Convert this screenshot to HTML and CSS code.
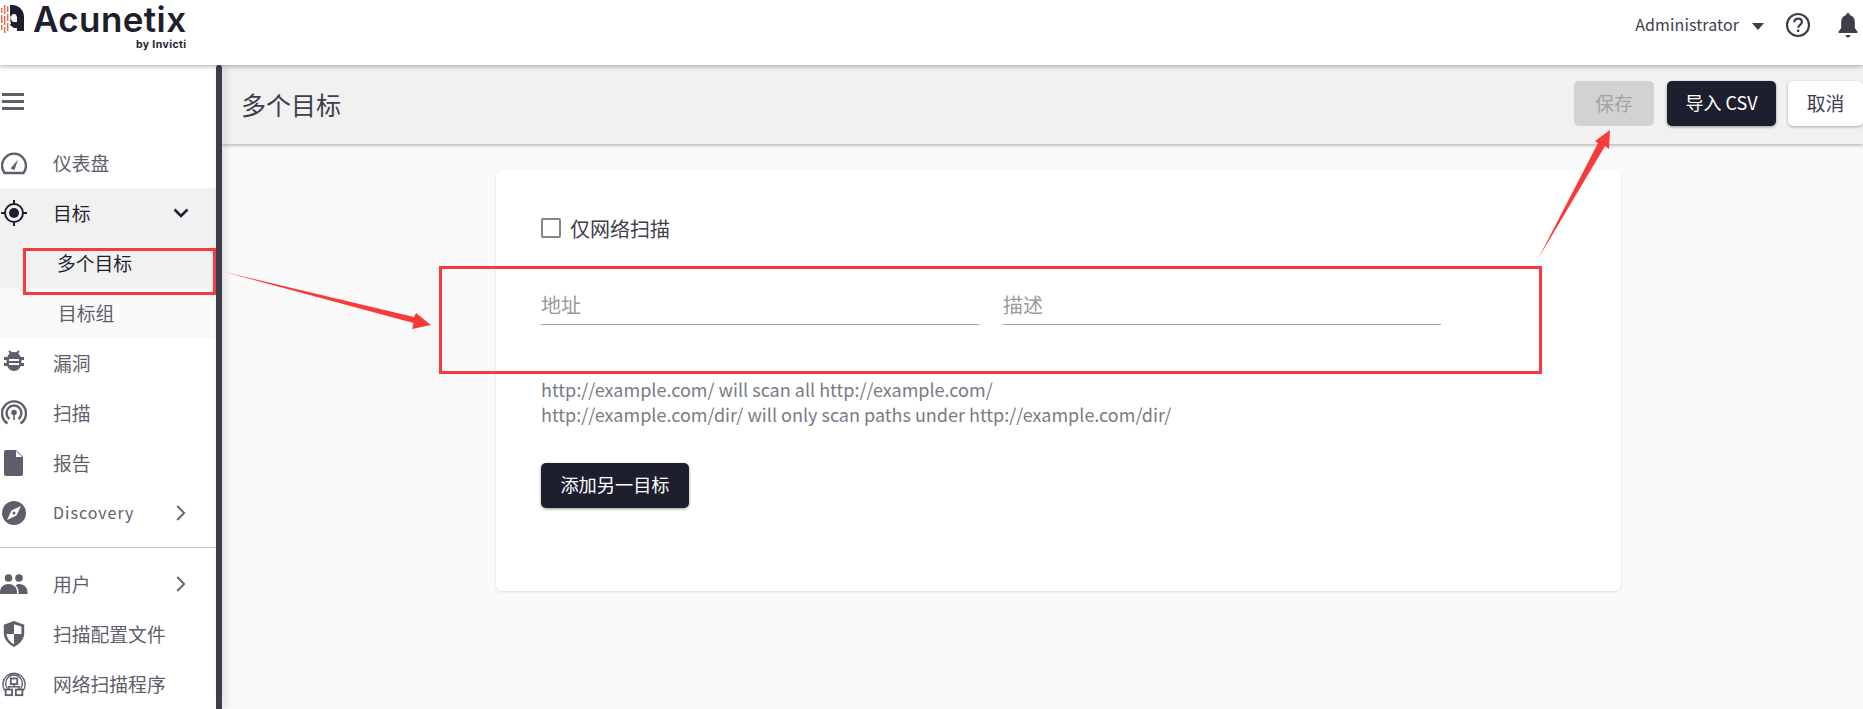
FILE: index.html
```html
<!DOCTYPE html>
<html lang="zh">
<head>
<meta charset="utf-8">
<title>Acunetix</title>
<link rel="stylesheet" href="styles.css">
</head>
<body>
<header class="topbar">
  <div class="logo">
    <svg class="logo-mark" viewBox="0 0 24 28" width="24" height="28">
      <g fill="#f0654a"><rect x="1" y="3" width="1.400" height="5"/><rect x="1" y="10" width="1.400" height="8"/><rect x="1" y="20" width="1.400" height="5"/><rect x="4" y="0" width="1.400" height="9"/><rect x="4" y="11" width="1.400" height="9"/><rect x="4" y="22" width="1.400" height="6"/><rect x="7" y="1" width="1.400" height="6"/><rect x="7" y="9" width="1.400" height="7"/><rect x="7" y="18" width="1.400" height="8"/></g>
      <path fill-rule="evenodd" d="M10 0h2c7 0 12 5 12 12v14h-7v-3h-3l-4-3 1-2c-1-1-1-4 0-5l-1-3V0zm4 9c-2 0-3 2-3 4s1 4 3 4h3v-4c0-2-1-4-3-4z" fill="#1e1f2e"/>
    </svg>
    <div class="logo-text">
      <span class="logo-name">Acunetix</span>
      <span class="logo-sub">by Invicti</span>
    </div>
  </div>
  <div class="top-actions">
    <span class="user">Administrator</span>
    <svg class="caret" viewBox="0 0 12 7" width="12" height="7"><path d="M0 0h12L6 7z"/></svg>
    <svg class="help" viewBox="0 0 26 26" width="26" height="26"><circle cx="13" cy="13" r="11" fill="none" stroke="#3e3d4b" stroke-width="2.200"/><path d="M9.200 10.200c0-2.200 1.700-3.600 3.900-3.600s3.800 1.400 3.800 3.300c0 3-3.600 2.900-3.700 5.900" fill="none" stroke="#3e3d4b" stroke-width="2.200"/><rect x="11.900" y="17.600" width="2.400" height="2.400" fill="#3e3d4b"/></svg>
    <svg class="bell" viewBox="0 0 20 26" width="20" height="26"><path d="M10 1c1 0 1.800.8 1.800 1.900 3.200.8 5 3.400 5 7v6l2.600 3.600v1.500H.6v-1.500L3.200 15.900v-6c0-3.600 1.800-6.200 5-7C8.200 1.800 9 1 10 1zM7.600 23h4.800c0 1.400-1 2.400-2.400 2.400S7.600 24.400 7.600 23z" fill="#3e3d4b"/></svg>
  </div>
</header>

<div class="layout">
  <nav class="sidebar">
    <div class="burger"><i></i><i></i><i></i></div>
    <ul class="menu">
      <li class="item">
        <svg class="ico" viewBox="0 0 26 22"><path d="M3.500 21A12 12 0 1 1 22.500 21z" fill="none" stroke="#5f5e6b" stroke-width="2.400"/><path d="M9.500 16.500l7.500-9-3.500 10.500z" fill="#5f5e6b"/></svg>
        <span>仪表盘</span>
      </li>
      <li class="item open">
        <svg class="ico" viewBox="0 0 26 26"><circle cx="13" cy="13" r="9" fill="none" stroke="#1e1f2e" stroke-width="2"/><circle cx="13" cy="13" r="5" fill="#1e1f2e"/><path d="M13 0v5M13 21v5M0 13h5M21 13h5" stroke="#1e1f2e" stroke-width="2"/></svg>
        <span>目标</span>
        <svg class="chev" viewBox="0 0 16 10" width="16" height="10"><path d="M1.500 1.500L8 8l6.500-6.500" fill="none" stroke="#1e1f2e" stroke-width="2.600"/></svg>
      </li>
      <li class="sub active">多个目标</li>
      <li class="sub second">目标组</li>
      <li class="item">
        <svg class="ico ico-bug" viewBox="0 0 26 26"><path d="M8 3l3 3M18 3l-3 3" stroke="#5f5e6b" stroke-width="2"/><path d="M13 4c4.500 0 7.500 4 7.500 9.500S17.500 23 13 23s-7.500-4-7.500-9.500S8.500 4 13 4z" fill="#5f5e6b"/><path d="M3 9h20v3H3zM3 15h20v3H3z" fill="#5f5e6b"/><path d="M8 11h10v2H8zM8 15h10v2H8z" fill="#fff"/></svg>
        <span>漏洞</span>
      </li>
      <li class="item">
        <svg class="ico" viewBox="0 0 26 26"><path d="M6.500 23.500a12 12 0 1 1 13 0" fill="none" stroke="#5f5e6b" stroke-width="2.400"/><path d="M8.500 19a7.500 7.500 0 1 1 9 0" fill="none" stroke="#5f5e6b" stroke-width="2.400"/><circle cx="13" cy="12.500" r="2.800" fill="#5f5e6b"/><path d="M13 14v6" stroke="#5f5e6b" stroke-width="1.600"/></svg>
        <span>扫描</span>
      </li>
      <li class="item">
        <svg class="ico" viewBox="0 0 26 26"><path d="M5 0h10l7 7v17a2 2 0 0 1-2 2H5a2 2 0 0 1-2-2V2a2 2 0 0 1 2-2z" fill="#5f5e6b"/><path d="M15 1v6h6z" fill="#fff"/></svg>
        <span>报告</span>
      </li>
      <li class="item">
        <svg class="ico" viewBox="0 0 26 26"><circle cx="13" cy="13" r="12" fill="#5f5e6b"/><path d="M20 6L15.500 15.500 6 20l4.500-9.500z" fill="#fff"/><circle cx="13" cy="13" r="1.500" fill="#5f5e6b"/></svg>
        <span class="latin">Discovery</span>
        <svg class="chev-r" viewBox="0 0 10 16" width="10" height="16"><path d="M1.200 1L8.200 8l-7 7" fill="none" stroke="#5f5e6b" stroke-width="1.800"/></svg>
      </li>
      <li class="rule"></li>
      <li class="item">
        <svg class="ico ico-wide" viewBox="0 0 28 20"><circle cx="8.500" cy="4" r="3.800" fill="#5f5e6b"/><circle cx="19" cy="4" r="3.800" fill="#5f5e6b"/><path d="M0 18c0-5 4-8 8.500-8s8.500 3 8.500 8v2H0z" fill="#5f5e6b"/><path d="M18.500 20v-2c0-3-1-5-3-6.500 1-.9 2.200-1.500 3.500-1.500 4.500 0 8.500 3 8.500 8v2z" fill="#5f5e6b"/></svg>
        <span>用户</span>
        <svg class="chev-r" viewBox="0 0 10 16" width="10" height="16"><path d="M1.200 1L8.200 8l-7 7" fill="none" stroke="#5f5e6b" stroke-width="1.800"/></svg>
      </li>
      <li class="item">
        <svg class="ico" viewBox="0 0 26 28"><path d="M13 0l11 4v9c0 7-5 12-11 15C7 25 2 20 2 13V4z" fill="#5f5e6b"/><path d="M13 3.500l8 2.500v8h-8zM5 14h8v11c-4-2-7.500-6-8-11z" fill="#fff"/></svg>
        <span>扫描配置文件</span>
      </li>
      <li class="item">
        <svg class="ico" viewBox="0 0 28 28"><path d="M4 21a12 12 0 1 1 20 0M7 19a9 9 0 1 1 14 0" fill="none" stroke="#5f5e6b" stroke-width="1.500"/><rect x="10.500" y="8" width="7" height="6" fill="none" stroke="#5f5e6b" stroke-width="2"/><rect x="5" y="20" width="7" height="6" fill="none" stroke="#5f5e6b" stroke-width="2"/><rect x="16" y="20" width="7" height="6" fill="none" stroke="#5f5e6b" stroke-width="2"/><path d="M14 14v3M8.500 20v-3h11v3" fill="none" stroke="#5f5e6b" stroke-width="1.600"/></svg>
        <span>网络扫描程序</span>
      </li>
    </ul>
  </nav>
  <div class="strip"></div>
  <main class="main">
    <div class="toolbar">
      <h1 class="title">多个目标</h1>
      <div class="tool-buttons">
        <button class="btn btn-off" type="button">保存</button>
        <button class="btn btn-dark" type="button">导入 CSV</button>
        <button class="btn btn-light" type="button">取消</button>
      </div>
    </div>
    <div class="content">
      <section class="card">
        <label class="check"><span class="box"></span><span>仅网络扫描</span></label>
        <div class="fields">
          <div class="field">地址</div>
          <div class="field">描述</div>
        </div>
        <p class="hint">http://example.com/ will scan all http://example.com/<br>http://example.com/dir/ will only scan paths under http://example.com/dir/</p>
        <button class="btn btn-dark btn-add" type="button">添加另一目标</button>
      </section>
    </div>
  </main>
</div>

<svg class="marks" viewBox="0 0 1863 709" width="1863" height="709">
  <g fill="none" stroke="#f93a3a" stroke-width="3">
    <rect x="24.500" y="249.500" width="190" height="44"/>
    <rect x="440.500" y="267.500" width="1100" height="105"/>
  </g>
  <g fill="#f93a3a">
    <path d="M224 272L414 317 416 313 431 325 412 329 413.500 323z"/>
    <path d="M1538 259L1598 143 1595 141 1610 130 1609 149 1605 146z"/>
  </g>
</svg>
</body>
</html>
```
FILE: styles.css
```css
* { box-sizing: border-box; }
html, body { margin: 0; height: 709px; overflow: hidden; }
body {
  position: relative;
  background: #fafafa;
  color: #3e3d4b;
  font-family: "Noto Sans CJK SC", "Noto Sans", sans-serif;
  font-size: 18.800px;
}
.topbar {
  height: 65px;
  background: #fff;
  display: flex;
  justify-content: space-between;
  align-items: flex-start;
  position: relative;
  z-index: 4;
  box-shadow: 0 1px 5px rgba(0,0,0,.35);
}
.logo { display: flex; align-items: flex-start; gap: 9px; padding-top: 2px; }
.logo-mark { margin-top: 3px; flex: none; }
.logo-text { display: flex; flex-direction: column; align-items: flex-end; }
.logo-name { font: 600 35px/34px "Inter", sans-serif; color: #1e1f2e; letter-spacing: .4px; }
.logo-sub { font: 700 10.500px/12px "Inter", sans-serif; color: #1e1f2e; margin-top: 3px; letter-spacing: .4px; }
.top-actions { display: flex; align-items: center; height: 50px; margin-right: 5px; }
.user { font-size: 16px; letter-spacing: .1px; line-height: 48px; height: 50px; }
.caret { fill: #3e3d4b; margin: 2px 0 0 13px; }
.help { margin-left: 21px; }
.bell { margin-left: 27px; }

.layout { display: flex; height: 644px; }
.sidebar { width: 216px; flex: none; background: #fff; overflow: hidden; }
.strip {
  width: 6px;
  flex: none;
  background: #3e3d4b;
  border-radius: 3px 3px 0 0;
  position: relative;
  z-index: 3;
  box-shadow: 3px 0 8px rgba(0,0,0,.14);
}
.burger { height: 73px; padding: 28px 0 0 2px; display: flex; flex-direction: column; gap: 4px; }
.burger i { display: block; width: 22px; height: 3px; background: #5f5e6b; }
.menu { list-style: none; margin: 0; padding: 0; }
.item {
  height: 50px;
  display: flex;
  align-items: center;
  position: relative;
  color: #5f5e6b;
  padding: 0 0 2px 53px;
}
.ico { position: absolute; left: 1px; top: 12px; width: 26px; height: 26px; }
.ico-bug { top: 10px; }
.ico-wide { width: 28px; left: 0; }
.open { background: #f1f1f1; color: #1e1f2e; }
.chev { position: absolute; left: 173px; top: 20px; }
.chev-r { position: absolute; left: 176px; top: 17px; }
.latin { font-size: 16px; letter-spacing: 1px; }
.sub { height: 50px; display: flex; align-items: center; padding-bottom: 2px; }
.active { background: #f1f1f1; color: #1e1f2e; padding-left: 57px; }
.second { background: #fafafa; color: #5f5e6b; padding-left: 58px; }
.rule { height: 1px; background: #c4c4c4; margin: 9px 0 11px; }

.main { flex: 1; min-width: 0; display: flex; flex-direction: column; }
.toolbar {
  height: 79px;
  background: #f1f1f1;
  display: flex;
  align-items: flex-start;
  justify-content: space-between;
  padding: 16px 0 0 19px;
  box-shadow: 0 1px 4px rgba(0,0,0,.35);
  position: relative;
  z-index: 2;
}
.title { margin: 3px 0 0; font-size: 25px; font-weight: 400; line-height: 40px; color: #3e3d4b; }
.tool-buttons { display: flex; gap: 12px; }
.btn {
  height: 45px;
  border: 0;
  border-radius: 5px;
  font: inherit;
  font-size: 18.800px;
  padding: 0 0 3px;
}
.btn-off { width: 80px; background: #d2d2d2; color: #a3a3a3; margin-right: 1px; }
.btn-dark { width: 109px; background: #1e1f2e; color: #fff; font-size: 18px; box-shadow: 0 1px 3px rgba(0,0,0,.4); }
.btn-light { width: 75px; background: #fff; color: #3e3d4b; box-shadow: 0 1px 3px rgba(0,0,0,.3); }
.content { flex: 1; padding: 26px 0 0 274px; }
.card {
  width: 1125px;
  height: 421px;
  background: #fff;
  border-radius: 6px;
  box-shadow: 0 1px 3px rgba(0,0,0,.12);
  padding: 44px 0 0 45px;
}
.check { display: flex; align-items: center; gap: 9px; height: 28px; font-size: 20px; }
.box { width: 20px; height: 20px; border: 2px solid #87868f; border-radius: 2px; flex: none; }
.fields { display: flex; gap: 24px; margin-top: 39px; }
.field {
  width: 438px;
  height: 44px;
  border-bottom: 1.500px solid #a3a3a6;
  color: #9a99a1;
  font-size: 20px;
  line-height: 48px;
}
.hint { margin: 52px 0 0; color: #7b7a85; font-size: 18px; line-height: 25px; }
.btn-add { display: block; width: 148px; margin-top: 36px; font-size: 18.200px; }

.marks { position: absolute; left: 0; top: 0; pointer-events: none; z-index: 5; }
```
